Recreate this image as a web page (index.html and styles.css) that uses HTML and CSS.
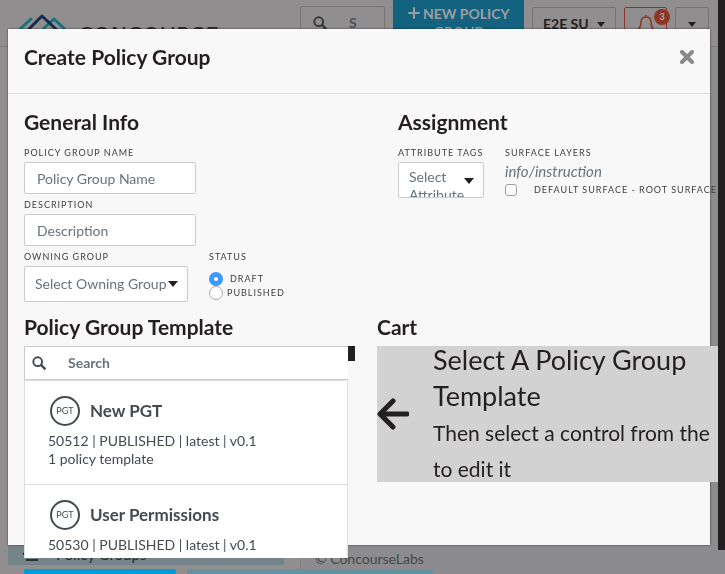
FILE: index.html
```html
<!DOCTYPE html>
<html lang="en">
<head>
<meta charset="utf-8">
<title>Create Policy Group</title>
<link rel="stylesheet" href="styles.css">
</head>
<body>
<div class="page">
  <header class="topbar">
    <a class="brand" href="#">
      <svg class="brand-mark" viewBox="0 0 52 30" aria-hidden="true">
        <path d="M1 22 13 11M26 20 36 11 51 25" fill="none" stroke="#14737f" stroke-width="3" stroke-linecap="round" stroke-linejoin="round"/>
        <path d="M8 24 24 8 41 24" fill="none" stroke="#152c4b" stroke-width="3" stroke-linecap="round" stroke-linejoin="round"/>
      </svg>
      <span class="brand-name">CONCOURSE</span>
    </a>
    <label class="top-search">
      <svg class="icon" viewBox="0 0 16 16" aria-hidden="true"><circle cx="6.5" cy="6.5" r="5" fill="none" stroke="currentColor" stroke-width="2.2"/><path d="m10.500 10.500 4 4" stroke="currentColor" stroke-width="2.800" stroke-linecap="round"/></svg>
      <input type="text" placeholder="S" aria-label="Search">
    </label>
    <button class="new-policy" type="button">
      <svg class="plus" viewBox="0 0 12 12" aria-hidden="true"><path d="M6 1v10M1 6h10" stroke="currentColor" stroke-width="2" stroke-linecap="round"/></svg>
      NEW POLICY GROUP</button>
    <div class="top-select">
      <select aria-label="Account"><option>E2E SU</option></select>
      <svg class="caret" viewBox="0 0 10 6" aria-hidden="true"><path d="M0 0h10L5 6z"/></svg>
    </div>
    <button class="bell" type="button" aria-label="Notifications">
      <svg viewBox="0 0 18 20" aria-hidden="true"><path d="M9 1v2M9 3C5.500 3 4 5.500 4 8c0 4-1 6-3 8h16c-2-2-3-4-3-8 0-2.500-1.500-5-5-5zM7 17a2 2 0 0 0 4 0" fill="none" stroke="currentColor" stroke-width="1.500" stroke-linejoin="round"/></svg>
      <span class="badge">3</span>
    </button>
    <button class="user-menu" type="button" aria-label="Account menu">
      <svg class="caret" viewBox="0 0 10 6" aria-hidden="true"><path d="M0 0h10L5 6z"/></svg>
    </button>
  </header>
  <div class="shell">
    <nav class="sidebar">
      <a class="nav-item" href="#">
        <svg class="nav-icon" viewBox="0 0 18 14" aria-hidden="true"><path d="M4 13h12" stroke="currentColor" stroke-width="2"/><path d="M1 6l4 4h7l4-4" stroke="currentColor" stroke-width="2" fill="none"/></svg>
        Policy Groups</a>
    </nav>
    <div class="content"><footer class="copyright">© ConcourseLabs</footer></div>
  </div>
  <div class="page-scroll"></div>
</div>

<form class="modal" role="dialog" aria-labelledby="dialog-title">
  <div class="modal-head">
    <h1 id="dialog-title">Create Policy Group</h1>
    <button class="close" type="button" aria-label="Close">
      <svg viewBox="0 0 14 14" aria-hidden="true"><path d="m2 2 10 10M12 2 2 12" stroke="currentColor" stroke-width="4" stroke-linecap="round"/></svg>
    </button>
  </div>
  <div class="modal-body">
    <div class="info-row">
      <section class="general">
        <h2>General Info</h2>
        <div class="field">
          <label for="name">Policy Group Name</label>
          <input class="text" id="name" type="text" placeholder="Policy Group Name">
        </div>
        <div class="field">
          <label for="desc">Description</label>
          <input class="text" id="desc" type="text" placeholder="Description">
        </div>
        <div class="field-pair">
          <div class="field">
            <label for="owner">Owning Group</label>
            <div class="select owner">
              <select id="owner"><option>Select Owning Group</option></select>
              <svg class="caret" viewBox="0 0 10 6" aria-hidden="true"><path d="M0 0h10L5 6z"/></svg>
            </div>
          </div>
          <fieldset class="field">
            <legend>Status</legend>
            <label class="radio draft"><input type="radio" name="status" checked>Draft</label>
            <label class="radio"><input type="radio" name="status">Published</label>
          </fieldset>
        </div>
      </section>
      <section>
        <h2>Assignment</h2>
        <div class="field-pair">
          <div class="field tags-field">
            <label for="tags">Attribute Tags</label>
            <div class="select tags">
              <span class="value" aria-hidden="true">Select Attribute</span>
              <svg class="caret" viewBox="0 0 10 6" aria-hidden="true"><path d="M0 0h10L5 6z"/></svg>
              <select id="tags" class="overlay"><option value=""></option></select>
            </div>
          </div>
          <fieldset class="field">
            <legend>Surface Layers</legend>
            <p class="hint">info/instruction</p>
            <label class="check"><input type="checkbox">Default Surface - Root Surface</label>
          </fieldset>
        </div>
      </section>
    </div>
    <div class="pick-row">
      <section>
        <h2>Policy Group Template</h2>
        <div class="picker">
          <div class="picker-main">
            <label class="search">
              <svg class="icon" viewBox="0 0 16 16" aria-hidden="true"><circle cx="6.500" cy="6.500" r="5" fill="none" stroke="currentColor" stroke-width="2.200"/><path d="m10.500 10.500 4 4" stroke="currentColor" stroke-width="2.800" stroke-linecap="round"/></svg>
              <input type="text" placeholder="Search" aria-label="Search templates">
            </label>
            <ul class="templates">
              <li>
                <h3><span class="pgt">PGT</span>New PGT</h3>
                <p>50512 | PUBLISHED | latest | v0.1</p>
                <p>1 policy template</p>
              </li>
              <li>
                <h3><span class="pgt">PGT</span>User Permissions</h3>
                <p>50530 | PUBLISHED | latest | v0.1</p>
              </li>
            </ul>
          </div>
          <div class="picker-scroll"></div>
        </div>
      </section>
      <section>
        <h2>Cart</h2>
        <div class="cart">
          <svg class="arrow" viewBox="0 0 32 32" aria-hidden="true"><path d="M16 3 3 16l13 13M4 16h26" fill="none" stroke="currentColor" stroke-width="5" stroke-linecap="round" stroke-linejoin="round"/></svg>
          <div>
            <p class="cart-title">Select A Policy Group Template</p>
            <p class="cart-text">Then select a control from the<br>to edit it</p>
          </div>
        </div>
      </section>
    </div>
    <div class="actions">
      <button class="primary" type="submit" aria-label="Save"></button>
      <button class="secondary" type="button" aria-label="Cancel"></button>
    </div>
  </div>
</form>
</body>
</html>
```
FILE: styles.css
```css
* { box-sizing: border-box; }
body, h1, h2, h3, p, ul, fieldset, legend { margin: 0; padding: 0; }
html, body { height: 100%; }
body {
  overflow: hidden;
  font: 14px/18px Lato, "Liberation Sans", sans-serif;
  color: #231f20;
  background: #8c8c8e;
}
button, input, select { font: inherit; color: inherit; margin: 0; }
ul { list-style: none; }
fieldset { border: 0; min-width: 0; }
svg { display: block; flex: none; }
.caret { width: 10px; height: 6px; fill: currentColor; pointer-events: none; }
.icon { width: 14px; height: 14px; }

/* Dimmed page */
.page { position: relative; height: 100%; display: flex; flex-direction: column; }
.topbar {
  height: 47px;
  flex: none;
  display: flex;
  align-items: flex-start;
  gap: 8px;
  padding: 0 16px 0 18px;
  background: #918e8f;
  border-bottom: 1px solid #7e7e80;
  overflow: hidden;
}
.brand { flex: 1; min-width: 0; display: flex; gap: 8px; padding-top: 8px; color: #2b2728; text-decoration: none; }
.brand-mark { width: 52px; height: 30px; }
.brand-name { padding-top: 16px; font: 22px/24px "DejaVu Sans", sans-serif; white-space: nowrap; }
.top-search {
  width: 85px; height: 34px; margin-top: 6px; padding-left: 12px;
  display: flex; align-items: center; gap: 22px;
  border: 1px solid #757374; border-radius: 2px; color: #33373b;
}
.top-search input { width: 32px; padding: 0; border: 0; background: none; font-weight: 700; }
.top-search input::placeholder { color: #4d5256; opacity: 1; }
.new-policy {
  width: 131px; height: 46px; padding: 5px 8px; border: 0;
  background: #136280; color: #9c9fa1; font-weight: 700; line-height: 18px;
}
.plus { display: inline-block; width: 12px; height: 12px; }
.top-select {
  width: 84px; height: 34px; margin-top: 7px; padding: 0 10px;
  display: flex; align-items: center; justify-content: space-between;
  border: 1px solid #757374; border-radius: 2px;
}
.top-select select { appearance: none; width: 46px; padding: 0; border: 0; background: none; font-weight: 700; }
.top-select .caret, .user-menu .caret { width: 8px; height: 5px; }
.bell {
  position: relative; width: 43px; height: 34px; margin-top: 7px; padding: 5px 12px;
  border: 1px solid #8e3726; border-radius: 2px; background: none; color: #8e3726;
}
.bell svg { width: 18px; height: 20px; }
.badge {
  position: absolute; top: 1px; right: -4px; width: 16px; height: 16px; border-radius: 50%;
  background: #8e3726; color: #b4aaa8; font: 700 9px/16px Lato, sans-serif; text-align: center;
}
.user-menu {
  width: 34px; height: 34px; margin-top: 7px; padding: 0;
  display: flex; align-items: center; justify-content: center;
  border: 1px solid #757374; border-radius: 2px; background: none;
}
.shell { flex: 1; display: flex; }
.sidebar {
  width: 301px; padding: 0 16px 9px 8px; background: #918e8f;
  display: flex; flex-direction: column; justify-content: flex-end;
  border-right: 1px solid #848284;
}
.nav-item {
  display: flex; align-items: center; gap: 16px; height: 22px; padding: 0 14px;
  background: #75838b; color: #2b2d30; text-decoration: none; font-size: 15px;
}
.nav-icon { width: 18px; height: 14px; }
.content { flex: 1; display: flex; align-items: flex-end; padding: 0 14px 6px; }
.copyright { color: #454648; }
.page-scroll { position: absolute; top: 0; right: 0; width: 7px; height: 550px; background: #231f20; }

/* Dialog */
.modal {
  position: fixed; inset: 29px 15px 29px 8px;
  background: #f8f8f8; box-shadow: 0 0 2px rgba(0, 0, 0, .6);
}
.modal-head {
  display: flex; align-items: center; justify-content: space-between;
  height: 65px; padding: 0 16px 8px; border-bottom: 1px solid #dedede;
}
h1, h2 { font-size: 21px; line-height: 24px; font-weight: 700; }
.close { padding: 0; border: 0; background: none; color: #8a8a8a; }
.close svg { width: 14px; height: 14px; }
.modal-body { padding: 16px; }
.info-row { display: grid; grid-template-columns: minmax(0, 5fr) minmax(0, 4fr); gap: 4px; }
.info-row h2 { margin-bottom: 13px; }
.field { margin-bottom: 5px; }
.field label, legend {
  display: block; font-size: 9px; line-height: 12px; letter-spacing: 1px;
  text-transform: uppercase; white-space: nowrap; color: #3f3d3e;
}
div.field > label, legend { margin-bottom: 3px; }
.text {
  display: block; width: 172px; height: 32px; padding: 0 12px;
  border: 1px solid #ccc; border-radius: 2px; background: #fff;
}
.text::placeholder { color: #68737b; opacity: 1; }
.field-pair { display: flex; gap: 21px; }
.select {
  position: relative; display: flex; align-items: center; justify-content: space-between;
  height: 36px; padding: 0 9px 0 10px; border: 1px solid #ccc; border-radius: 2px; background: #fff;
}
.select select { appearance: none; padding: 0; border: 0; background: none; color: #68737b; }
.owner { width: 164px; }
.owner select { width: 132px; }
.tags-field { width: 86px; flex: none; }
.tags { align-items: flex-start; overflow: hidden; padding-top: 5px; }
.tags .value { width: 46px; color: #68737b; }
.tags .caret { margin-top: 10px; }
.select .overlay { position: absolute; inset: 0; width: 100%; opacity: 0; }
.field .radio, .field .check { display: flex; align-items: center; }
.field .radio { height: 14px; gap: 4px; }
.field .draft { gap: 7px; margin-top: 6px; }
.radio input {
  appearance: none; flex: none; width: 14px; height: 14px; border: 1px solid #a8a8a8; border-radius: 50%; background: #fff;
}
.radio input:checked { border: 5px solid #3b99fc; }
.hint { font-style: italic; font-size: 15px; color: #68737b; }
.field .check { gap: 17px; margin-top: 4px; }
.check input {
  appearance: none; flex: none; width: 12px; height: 12px; border: 1px solid #a0a0a0; border-radius: 3px; background: #fff;
}
.pick-row {
  display: grid; grid-template-columns: minmax(0, 33fr) minmax(0, 34fr); gap: 22px; align-items: start;
  margin: 8px -24px 0 0;
}
.pick-row h2 { margin-bottom: 7px; }
.picker { display: flex; align-items: flex-start; }
.picker-main { flex: 1; background: #fff; }
.picker-scroll { width: 7px; height: 15px; background: #231f20; }
.search {
  display: flex; align-items: center; gap: 22px; height: 34px; padding-left: 7px;
  border: 1px solid #ccc; border-right: 0; color: #434a51;
}
.search input { flex: 1; min-width: 0; padding: 0; border: 0; background: none; outline: 0; font-weight: 700; }
.search input::placeholder { color: #68737b; opacity: 1; }
.templates { border: 1px solid #dededf; border-width: 1px 1px 0; color: #434a51; }
.templates li { padding: 15px 23px 16px; }
.templates li + li { border-top: 1px solid #dededf; padding: 15px 23px 4px; }
h3 { display: flex; align-items: center; gap: 10px; padding-left: 2px; margin-bottom: 6px; font-size: 17px; line-height: 30px; }
.pgt {
  width: 30px; height: 30px; border: 2px solid #434a51; border-radius: 50%;
  font-size: 9px; font-weight: 400; line-height: 26px; text-align: center;
  -webkit-text-stroke: 0;
}
.cart { display: flex; align-items: center; gap: 24px; background: #d2d2d2; }
.arrow { width: 32px; height: 32px; }
.cart-title { font-size: 27px; line-height: 36px; margin: -4px 0 1px; }
.cart-text { font-size: 21px; line-height: 36px; margin-bottom: -5px; white-space: nowrap; }
.actions { display: flex; gap: 11px; margin-top: 11px; }
.actions button { height: 36px; padding: 0; border: 0; border-radius: 2px; }
.primary { width: 152px; background: #009fdb; }
.secondary { width: 246px; background: #6790a2; }
```
